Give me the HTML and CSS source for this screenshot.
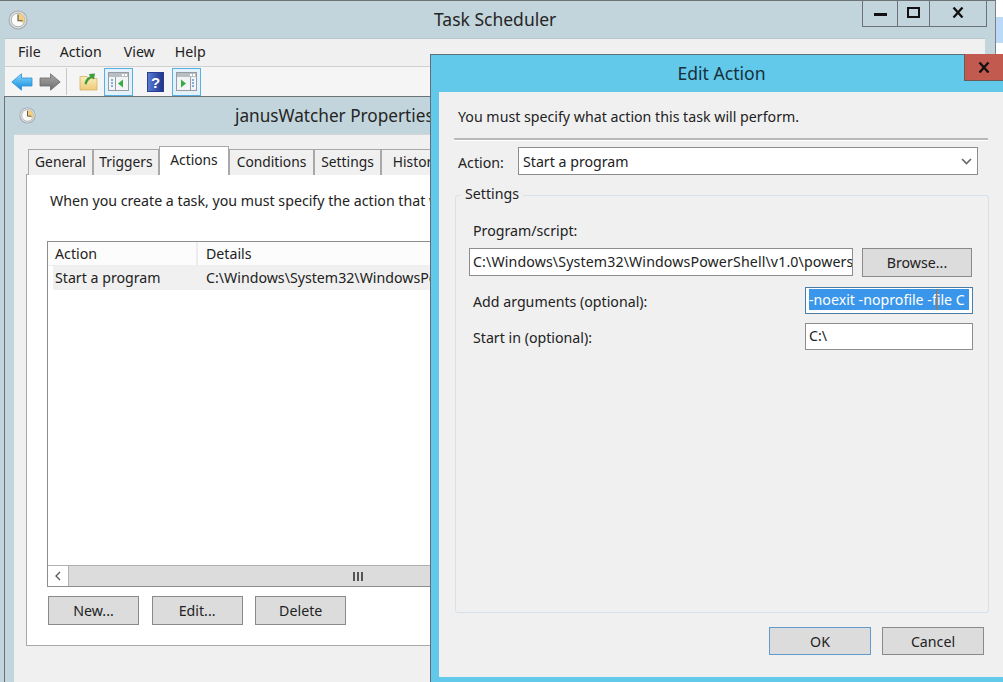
FILE: index.html
```html
<!DOCTYPE html>
<html lang="en">
<head>
  <meta charset="UTF-8" />
  <meta name="viewport" content="width=device-width, initial-scale=1.0"/>
  <title>Task Scheduler</title>
  <link rel="stylesheet" href="styles.css">
</head>
<body>
  <svg class="defs" width="0" height="0">
    <defs>
      <linearGradient id="blueArrow" x1="0" y1="0" x2="0" y2="1">
        <stop offset="0" stop-color="#8fd8f8"/>
        <stop offset=".5" stop-color="#49b2ee"/>
        <stop offset="1" stop-color="#1c86d8"/>
      </linearGradient>
      <linearGradient id="grayArrow" x1="0" y1="0" x2="0" y2="1">
        <stop offset="0" stop-color="#a8a8a8"/>
        <stop offset="1" stop-color="#6e6e6e"/>
      </linearGradient>
      <linearGradient id="folderFill" x1="0" y1="0" x2="0" y2="1">
        <stop offset="0" stop-color="#fbeec0"/>
        <stop offset="1" stop-color="#eecb78"/>
      </linearGradient>
      <linearGradient id="helpFill" x1="0" y1="0" x2="1" y2="0">
        <stop offset="0" stop-color="#5a7cd8"/>
        <stop offset="1" stop-color="#1d3288"/>
      </linearGradient>
      <symbol id="clock" viewBox="0 0 20 20">
        <circle cx="10" cy="10" r="9.500" fill="#a4a8ab"/>
        <circle cx="10" cy="10" r="8.500" fill="#dfe2e4"/>
        <circle cx="10" cy="10" r="6.800" fill="#fbfbf8" stroke="#9a9ea1" stroke-width=".8"/>
        <path d="M10 10V3.400A6.600 6.600 0 0 1 15.700 13.300Z" fill="#f2cf7c"/>
        <path d="M10 4.500V10.800H14.500" fill="none" stroke="#555" stroke-width="1.100"/>
      </symbol>
    </defs>
  </svg>

  <div class="behind"></div>

  <!-- main window -->
  <div class="window main">
    <div class="titlebar main-title">
      <svg class="clock-big"><use href="#clock"/></svg>
      <span class="title-text">Task Scheduler</span>
      <div class="controls">
        <span class="ctl ctl-min"><i></i></span>
        <span class="ctl ctl-max"><i></i></span>
        <span class="ctl ctl-close">
          <svg width="12" height="11" viewBox="0 0 12 11"><path d="M1.500 .5l9 10M10.500 .5l-9 10" stroke="#111" stroke-width="2.300" fill="none"/></svg>
        </span>
      </div>
    </div>
    <div class="client">
      <div class="menubar">
        <span class="menu-file">File</span>
        <span class="menu-action">Action</span>
        <span class="menu-view">View</span>
        <span class="menu-help">Help</span>
      </div>
      <div class="toolbar">
        <svg class="tb-arrow" width="22" height="18" viewBox="0 0 22 18">
          <path d="M.8 9L10.500 .8V5H21V13H10.500V17.200Z" fill="url(#blueArrow)" stroke="#2d8fdc" stroke-width=".8"/>
        </svg>
        <svg class="tb-arrow tb-forward" width="22" height="18" viewBox="0 0 22 18">
          <path d="M21.200 9L11.500 .8V5H1V13H11.500V17.200Z" fill="url(#grayArrow)" stroke="#6b6b6b" stroke-width=".8"/>
        </svg>
        <span class="tb-sep"></span>
        <svg class="tb-folder" width="19" height="19" viewBox="0 0 19 19">
          <path d="M1 4.500H8L9 6.500H18V18H1Z" fill="url(#folderFill)" stroke="#d4b365" stroke-width=".8"/>
          <path d="M5.500 12C6 8 8 5.500 11 4.500L10 2L16 1.500L15 7.500L12.800 6C10.500 7 8.500 9 7.500 12.500Z" fill="#3f9e3a"/>
        </svg>
        <span class="tb-btn tb-btn-first">
          <svg width="21" height="19" viewBox="0 0 21 19">
            <rect x=".5" y=".5" width="20" height="18" fill="#f2f4f6" stroke="#969ca2"/>
            <rect x="1" y="1" width="19" height="4" fill="#b9bec3"/>
            <rect x="14" y="2" width="2" height="2" fill="#fff"/><rect x="17" y="2" width="2" height="2" fill="#fff"/>
            <rect x="7" y="5" width="1" height="13" fill="#969ca2"/>
            <path d="M3 8h2M3 11h2M3 14h2" stroke="#5a9ad6" stroke-width="1.500"/>
            <path d="M15 7.500V15.500L10 11.500Z" fill="#35ad42"/>
          </svg>
        </span>
        <svg class="tb-help" width="17" height="20" viewBox="0 0 17 20">
          <rect x=".5" y=".5" width="16" height="19" fill="url(#helpFill)" stroke="#2a3f92"/>
          <text x="8.500" y="15.500" text-anchor="middle" class="help-mark">?</text>
        </svg>
        <span class="tb-btn tb-btn-last">
          <svg width="21" height="19" viewBox="0 0 21 19">
            <rect x=".5" y=".5" width="20" height="18" fill="#f2f4f6" stroke="#969ca2"/>
            <rect x="1" y="1" width="19" height="4" fill="#b9bec3"/>
            <rect x="14" y="2" width="2" height="2" fill="#fff"/><rect x="17" y="2" width="2" height="2" fill="#fff"/>
            <rect x="14" y="5" width="1" height="13" fill="#969ca2"/>
            <path d="M16 8h2M16 11h2M16 14h2" stroke="#5a9ad6" stroke-width="1.500"/>
            <path d="M5 7.500V15.500L10 11.500Z" fill="#35ad42"/>
          </svg>
        </span>
      </div>
    </div>
  </div>

  <!-- properties dialog -->
  <div class="window props">
    <div class="titlebar props-title">
      <svg class="clock-small"><use href="#clock"/></svg>
      <span class="title-text">janusWatcher Properties</span>
    </div>
    <div class="props-body">
      <div class="tabs">
        <span class="tab tab-general">General</span>
        <span class="tab tab-triggers">Triggers</span>
        <span class="tab tab-active">Actions</span>
        <span class="tab tab-conditions">Conditions</span>
        <span class="tab tab-settings">Settings</span>
        <span class="tab tab-history">History</span>
      </div>
      <div class="tab-panel">
        <p class="panel-intro">When you create a task, you must specify the action that will occur when your task starts.</p>
        <div class="list">
          <div class="list-head">
            <span class="col-action">Action</span>
            <span class="col-details">Details</span>
          </div>
          <div class="list-row">
            <span class="col-action">Start a program</span>
            <span class="col-details">C:\Windows\System32\WindowsPowerShell\v1.0\powershell.exe</span>
          </div>
          <div class="list-fill"></div>
          <div class="hscroll">
            <span class="hscroll-btn">
              <svg width="8" height="10" viewBox="0 0 8 10"><path d="M6 1L2 5L6 9" fill="none" stroke="#555" stroke-width="1.300"/></svg>
            </span>
            <span class="hscroll-grip"><i></i><i></i><i></i></span>
          </div>
        </div>
        <div class="list-buttons">
          <span class="btn btn-list">New...</span>
          <span class="btn btn-list">Edit...</span>
          <span class="btn btn-list">Delete</span>
        </div>
      </div>
    </div>
  </div>

  <!-- edit action dialog -->
  <div class="window edit">
    <div class="edit-title">
      <span>Edit Action</span>
      <span class="edit-close">
        <svg width="12" height="11" viewBox="0 0 12 11"><path d="M1.500 .5l9 10M10.500 .5l-9 10" stroke="#111" stroke-width="2.300" fill="none"/></svg>
      </span>
    </div>
    <div class="edit-body">
      <p class="edit-intro">You must specify what action this task will perform.</p>
      <div class="rule"></div>
      <div class="action-row">
        <span class="action-label">Action:</span>
        <div class="select">
          <span>Start a program</span>
          <svg width="11" height="7" viewBox="0 0 11 7"><path d="M1 1L5.500 5.500L10 1" fill="none" stroke="#666" stroke-width="1.600"/></svg>
        </div>
      </div>
      <div class="group">
        <span class="legend">Settings</span>
        <div class="group-label">Program/script:</div>
        <div class="program-row">
          <div class="field field-program">C:\Windows\System32\WindowsPowerShell\v1.0\powershell.exe</div>
          <span class="btn btn-browse">Browse...</span>
        </div>
        <div class="arg-row">
          <span class="arg-label">Add arguments (optional):</span>
          <div class="field field-arg focused"><span class="selected">-noexit -noprofile -<i class="caret"></i>file C</span></div>
        </div>
        <div class="arg-row arg-row-last">
          <span class="arg-label">Start in (optional):</span>
          <div class="field field-arg">C:\</div>
        </div>
      </div>
      <div class="edit-buttons">
        <span class="btn btn-main btn-default">OK</span>
        <span class="btn btn-main">Cancel</span>
      </div>
    </div>
  </div>
</body>
</html>
```

FILE: styles.css
```css
* {
  box-sizing: border-box;
}

html, body {
  margin: 0;
  height: 100%;
}

body {
  position: relative;
  width: 1003px;
  height: 682px;
  overflow: hidden;
  background-color: #fff;
  font-family: "Noto Sans", "Open Sans", sans-serif;
  font-size: 14.2px;
  color: #222;
}

.defs {
  position: absolute;
}

.behind {
  position: absolute;
  left: 995px;
  top: 17px;
  width: 8px;
  height: 26px;
  background-color: #bcd9f7;
}

.window {
  position: absolute;
}

.main {
  left: 0;
  top: 0;
  width: 996px;
  height: 682px;
  background-color: #c3d5dc;
  border-top: 1px solid #6d7276;
  border-right: 1px solid #7c8184;
}

.titlebar {
  display: flex;
  align-items: center;
  position: relative;
}

.main-title {
  height: 37px;
  padding-left: 8px;
}

.clock-big {
  width: 20px;
  height: 20px;
}

.main-title .title-text {
  position: absolute;
  left: 434px;
  top: 6px;
  font-size: 17.500px;
  color: #252525;
}

.controls {
  position: absolute;
  top: -1px;
  left: 862px;
  display: flex;
  height: 27px;
  border: 1px solid #6d7276;
  border-top: 0;
  width: 125px;
}

.ctl {
  display: flex;
  align-items: center;
  justify-content: center;
  border-right: 1px solid #6d7276;
  padding-bottom: 2px;
}

.ctl-min {
  width: 35px;
}

.ctl-min i {
  display: block;
  width: 13px;
  height: 3px;
  margin-top: 5px;
  background-color: #111;
}

.ctl-max {
  width: 32px;
}

.ctl-max i {
  display: block;
  width: 13px;
  height: 11px;
  border: 2px solid #111;
}

.ctl-close {
  flex: 1;
  border-right: 0;
}

.client {
  margin-left: 5px;
  margin-right: 10px;
  height: 58px;
  background-color: #f0f0f0;
  border-top: 1px solid #b5c6cd;
}

.menubar {
  display: flex;
  align-items: center;
  height: 28px;
  padding-bottom: 2px;
  border-bottom: 1px solid #d0d0d0;
  color: #222;
}

.menu-file {
  margin-left: 13px;
}

.menu-action {
  margin-left: 19px;
}

.menu-view {
  margin-left: 22px;
}

.menu-help {
  margin-left: 20px;
}

.toolbar {
  display: flex;
  align-items: center;
  height: 29px;
  background-color: #f5f5f5;
}

.tb-arrow {
  margin-left: 6px;
}

.tb-sep {
  width: 1px;
  height: 27px;
  margin-left: 5px;
  background-color: #c8c8c8;
}

.tb-folder {
  margin-left: 12px;
}

.tb-btn {
  display: flex;
  align-items: center;
  justify-content: center;
  width: 29px;
  height: 28px;
  background-color: #e3f1fb;
  border: 1px solid #56b0e4;
}

.tb-btn-first {
  margin-left: 6px;
}

.tb-help {
  margin-left: 14px;
}

.help-mark {
  font-family: "Liberation Sans", sans-serif;
  font-size: 15px;
  font-weight: bold;
  fill: #fff;
}

.tb-btn-last {
  margin-left: 8px;
}

.props {
  z-index: 1;
  left: 4px;
  top: 96px;
  width: 700px;
  height: 586px;
  background-color: #c3d5dc;
  border-top: 1px solid #6d7276;
  border-left: 1px solid #6d7276;
}

.props-title {
  height: 37px;
  padding-left: 14px;
}

.clock-small {
  width: 17px;
  height: 17px;
  margin-bottom: 1px;
}

.props-title .title-text {
  margin-left: 199px;
  font-size: 17.200px;
  color: #252525;
}

.props-body {
  height: 548px;
  margin-left: 9px;
  padding: 12px 0 0 12px;
  background-color: #f0f0f0;
  border-top: 1px solid #d5d5d5;
}

.tabs {
  display: flex;
  align-items: flex-end;
  height: 28px;
  padding-left: 2px;
  position: relative;
  z-index: 1;
}

.tab {
  display: flex;
  align-items: center;
  justify-content: center;
  height: 26px;
  padding-bottom: 2px;
  font-size: 13.800px;
  background-color: #f0f0f0;
  border: 1px solid #a8a8a8;
  border-bottom: 0;
}

.tab-general {
  width: 65px;
}

.tab-triggers {
  width: 66px;
}

.tab-active {
  width: 70px;
  height: 29px;
  padding-bottom: 4px;
  background-color: #fff;
}

.tab-conditions {
  width: 85px;
}

.tab-settings {
  width: 67px;
}

.tab-history {
  width: 70px;
}

.tab-panel {
  width: 600px;
  height: 472px;
  margin-top: -1px;
  padding: 16px 0 0 21px;
  background-color: #fff;
  border: 1px solid #a8a8a8;
}

.panel-intro {
  margin: 0 0 0 2px;
  white-space: nowrap;
}

.list {
  display: flex;
  flex-direction: column;
  width: 500px;
  height: 346px;
  margin-top: 31px;
  margin-left: -1px;
  border: 1px solid #8d8d8d;
}

.list-head {
  display: flex;
  align-items: center;
  height: 24px;
  background-color: #fcfcfc;
  border-bottom: 1px solid #ededed;
}

.list-head .col-action {
  border-right: 2px solid #ededed;
  line-height: 23px;
}

.col-action {
  width: 150px;
  padding-left: 7px;
  flex: none;
}

.col-details {
  padding-left: 8px;
  white-space: nowrap;
}

.list-row {
  display: flex;
  align-items: center;
  height: 24px;
  margin-left: 5px;
  padding-bottom: 2px;
  background-color: #f0f0f0;
}

.list-row .col-action {
  width: 145px;
  padding-left: 2px;
}

.list-fill {
  flex: 1;
}

.hscroll {
  display: flex;
  align-items: center;
  height: 21px;
  background-color: #dcdcdc;
  border-top: 1px solid #b0b0b0;
}

.hscroll-btn {
  display: flex;
  align-items: center;
  justify-content: center;
  width: 21px;
  height: 20px;
  background-color: #fff;
  border-right: 1px solid #b0b0b0;
}

.hscroll-grip {
  display: flex;
  gap: 2px;
  margin-left: 284px;
}

.hscroll-grip i {
  display: block;
  width: 2px;
  height: 9px;
  background-color: #555;
}

.list-buttons {
  display: flex;
  gap: 12.600px;
  margin-top: 9px;
}

.btn {
  display: flex;
  align-items: center;
  justify-content: center;
  background-color: #dcdcdc;
  border: 1px solid #8a8a8a;
  box-shadow: inset 0 0 0 1px #dcdcdc;
}

.btn-list {
  width: 91px;
  height: 29px;
}

.edit {
  z-index: 2;
  left: 430px;
  top: 54px;
  width: 580px;
  height: 628px;
  background-color: #62c9ea;
  border-top: 1px solid #5f6f78;
  border-left: 1px solid #5f6f78;
}

.edit-title {
  position: relative;
  display: flex;
  align-items: center;
  justify-content: center;
  height: 37px;
  width: 581px;
  padding-bottom: 2px;
  font-size: 17.600px;
  color: #17303a;
}

.edit-close {
  position: absolute;
  left: 533px;
  top: -1px;
  display: flex;
  align-items: center;
  justify-content: center;
  width: 40px;
  height: 27px;
  background-color: #c25a50;
  border: 1px solid #6d5a58;
  border-top: 0;
}

.edit-body {
  height: 585px;
  margin-left: 8px;
  padding: 15px 0 0 19px;
  background-color: #f0f0f0;
}

.edit-intro {
  margin: 0;
  line-height: 20px;
}

.rule {
  width: 534px;
  height: 3px;
  margin-top: 11px;
  margin-left: -4px;
  background-color: #b9b9b9;
  border-bottom: 1px solid #fff;
}

.action-row {
  display: flex;
  align-items: center;
  margin-top: 6px;
}

.action-label {
  flex: 0 0 60px;
  padding-top: 2px;
}

.select {
  display: flex;
  align-items: center;
  justify-content: space-between;
  flex: none;
  width: 460px;
  height: 28px;
  padding: 0 5px 0 4px;
  background-color: #fff;
  border: 1px solid #8d8d8d;
}

.group {
  position: relative;
  width: 534px;
  height: 418px;
  margin-top: 20px;
  margin-left: -3px;
  padding: 25px 0 0 17px;
  border: 1px solid #d7e1e8;
  border-radius: 3px;
}

.legend {
  position: absolute;
  left: 5px;
  top: -12px;
  padding: 0 4px;
  line-height: 20px;
  background-color: #f0f0f0;
}

.group-label {
  line-height: 20px;
}

.program-row {
  display: flex;
  gap: 9px;
  margin-top: 7px;
  margin-left: -4px;
}

.field {
  height: 28px;
  padding: 3px 3px 0;
  line-height: 20px;
  overflow: hidden;
  white-space: nowrap;
  background-color: #fff;
  border: 1px solid #8d8d8d;
}

.field-program {
  width: 384px;
  letter-spacing: .12px;
}

.btn-browse {
  width: 110px;
  height: 29px;
}

.arg-row {
  display: flex;
  align-items: center;
  justify-content: space-between;
  width: 500px;
  margin-top: 10px;
}

.arg-row-last {
  margin-top: 9px;
}

.arg-label {
  padding-top: 2px;
}

.field-arg {
  width: 168px;
  height: 27px;
  padding-top: 2px;
}

.focused {
  border-color: #4a7ea8;
  padding-top: 1px;
}

.selected {
  display: inline-block;
  position: relative;
  line-height: 21px;
  width: 160px;
  color: #fff;
  background-color: #3a96ea;
}

.caret {
  position: absolute;
  top: 0;
  left: 127px;
  width: 1px;
  height: 21px;
  background-color: #c8691c;
}

.edit-buttons {
  display: flex;
  gap: 11px;
  margin-top: 14px;
  margin-left: 311px;
}

.btn-main {
  width: 102px;
  height: 28px;
}

.btn-default {
  border-color: #5f9ccd;
}
```
